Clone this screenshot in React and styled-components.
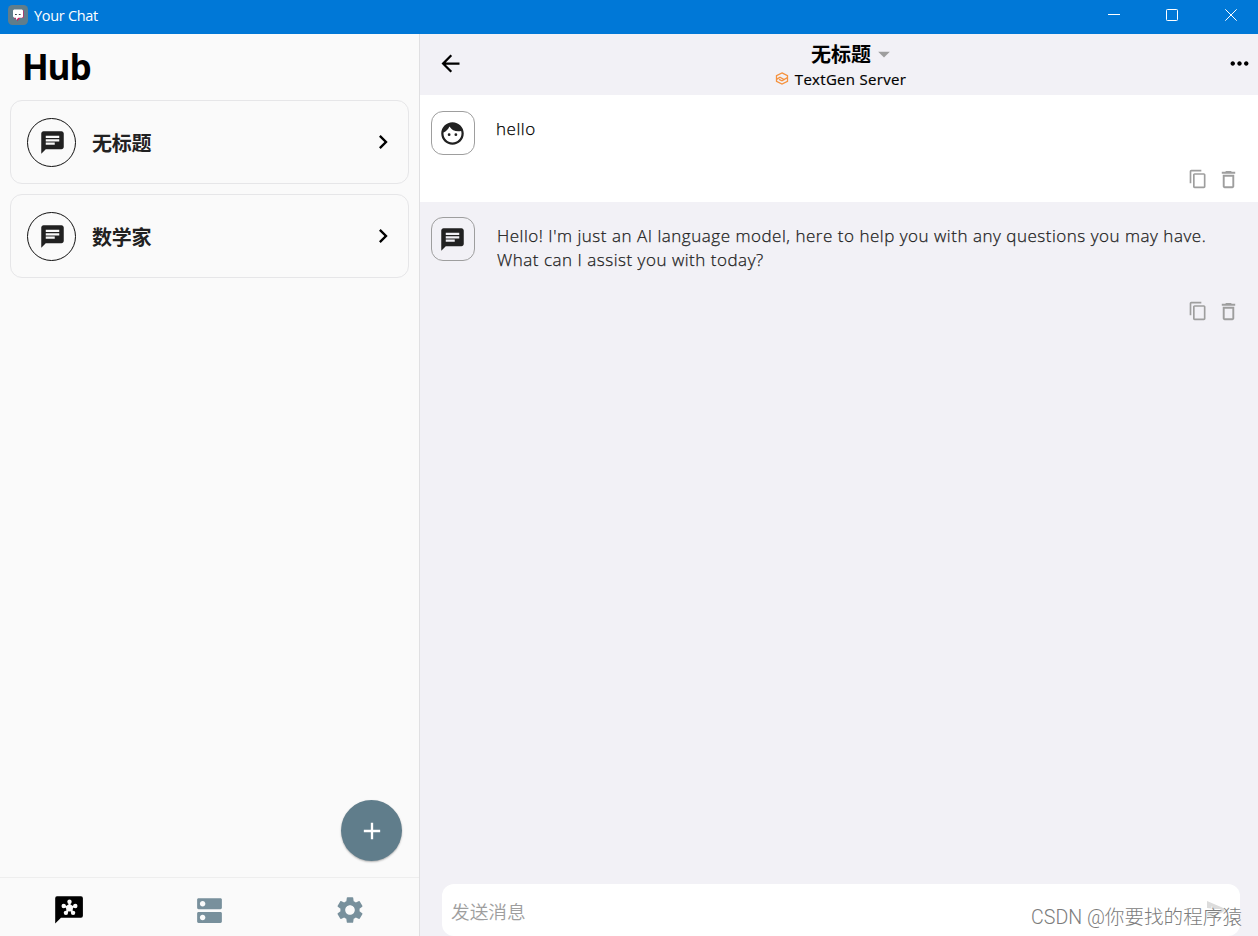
import styled, { createGlobalStyle } from "styled-components";
import {
  MdAdd,
  MdArrowBack,
  MdArrowDropDown,
  MdChat,
  MdChevronRight,
  MdContentCopy,
  MdDeleteOutline,
  MdDns,
  MdFace,
  MdMoreHoriz,
  MdSend,
  MdSettings,
} from "react-icons/md";

const chats = [
  { id: 1, name: "无标题" },
  { id: 2, name: "数学家" },
];

const messages = [
  { id: 1, user: true, lines: ["hello"] },
  {
    id: 2,
    user: false,
    lines: [
      "Hello! I'm just an AI language model, here to help you with any questions you may have.",
      "What can I assist you with today?",
    ],
  },
];

function AppLogo() {
  return (
    <svg width="20" height="20" viewBox="0 0 20 20">
      <rect width="20" height="20" rx="4.5" fill="#607d8b" />
      <path d="M6 5.6h9.6v7.2h-3.4L9 16.2v-2.6H6z" fill="#d81b60" />
      <path d="M6 4.600h8l1 1v6.200l-1 1h-3.600L8 15v-2.200H6.200L5 11.500V5.600z" fill="#fff" />
      <path d="M7 9.500h1.800M10.800 9.500h1.800" stroke="#37474f" strokeWidth="1" />
    </svg>
  );
}

function ServerLogo() {
  return (
    <svg width="14" height="14" viewBox="0 0 14 14" fill="none" stroke="#f5923e" strokeWidth="1.300">
      <path d="M7 .9 12.500 3.700v5.600L7 12.100 1.500 9.300V3.700z" />
      <path d="M1.500 7.400 5 5.200l4 2.400 3.500-2M4 7.300l3 1.500 3-1.700" />
    </svg>
  );
}

function HubIcon() {
  const angles = [-90, -18, 54, 126, 198];
  return (
    <svg width="28" height="28" viewBox="0 0 28 28">
      <path d="M2 .3h24a1.900 1.900 0 0 1 1.900 1.900v17.600a1.900 1.900 0 0 1-1.900 1.900H6L.2 27.500V2.200A1.900 1.900 0 0 1 2 .3z" fill="#000" />
      <g fill="#fafafa" stroke="#fafafa">
        <circle cx="14.500" cy="11.900" r="3.500" stroke="none" />
        {angles.map((a) => {
          const x = 14.5 + 6.1 * Math.cos((a * Math.PI) / 180);
          const y = 11.9 + 6.1 * Math.sin((a * Math.PI) / 180);
          return (
            <g key={a}>
              <line x1="14.500" y1="11.900" x2={x} y2={y} strokeWidth="2" />
              <circle cx={x} cy={y} r="2.200" stroke="none" />
            </g>
          );
        })}
      </g>
    </svg>
  );
}

function TitleBar() {
  return (
    <Bar>
      <AppLogo />
      <BarTitle>Your Chat</BarTitle>
      <WindowButtons>
        <svg width="12" height="12"><path d="M0 5.500h12" /></svg>
        <svg width="12" height="12"><rect x=".5" y=".5" width="11" height="11" rx=".8" /></svg>
        <svg width="12" height="12"><path d="M.3.3l11.400 11.400M11.700.3.3 11.700" /></svg>
      </WindowButtons>
    </Bar>
  );
}

function Message({ message }) {
  return (
    <MessageRow $user={message.user}>
      <Avatar $user={message.user}>
        {message.user ? <MdFace size={27} /> : <MdChat size={27} />}
      </Avatar>
      <MessageBody $user={message.user}>
        {message.lines.map((line) => (
          <p key={line}>{line}</p>
        ))}
      </MessageBody>
      <Actions>
        <MdContentCopy size={20} />
        <MdDeleteOutline size={23} />
      </Actions>
    </MessageRow>
  );
}

function App() {
  return (
    <Window>
      <GlobalStyle />
      <TitleBar />
      <Content>
        <Sidebar>
          <Heading>Hub</Heading>
          <ChatList>
            {chats.map((chat) => (
              <ChatCard key={chat.id}>
                <ChatCircle>
                  <MdChat size={27} />
                </ChatCircle>
                <ChatName>{chat.name}</ChatName>
                <MdChevronRight size={28} />
              </ChatCard>
            ))}
          </ChatList>
          <AddButton>
            <MdAdd size={28} />
          </AddButton>
          <BottomNav>
            <HubIcon />
            <MdDns size={33} />
            <MdSettings size={32} />
          </BottomNav>
        </Sidebar>
        <ChatScreen>
          <ChatHeader>
            <MdArrowBack size={27} />
            <HeaderCenter>
              <HeaderTitle>
                无标题
                <MdArrowDropDown size={28} />
              </HeaderTitle>
              <HeaderServer>
                <ServerLogo />
                TextGen Server
              </HeaderServer>
            </HeaderCenter>
            <MdMoreHoriz size={27} />
          </ChatHeader>
          {messages.map((message) => (
            <Message key={message.id} message={message} />
          ))}
          <InputBox>
            <Placeholder>发送消息</Placeholder>
            <MdSend size={24} />
          </InputBox>
        </ChatScreen>
      </Content>
      <Watermark>CSDN @你要找的程序猿</Watermark>
    </Window>
  );
}

export default App;

const GlobalStyle = createGlobalStyle`
* {
  box-sizing: border-box;
}
body {
  margin: 0;
  overflow: hidden;
  font-family: "Open Sans", "Noto Sans CJK SC", sans-serif;
}
p, h1 {
  margin: 0;
}
svg {
  display: block;
  flex-shrink: 0;
}
`;

const Window = styled.div`
position: relative;
display: flex;
flex-direction: column;
width: 1258px;
height: 936px;
overflow: hidden;
`;

const Bar = styled.header`
display: flex;
align-items: center;
height: 34px;
padding: 0 21px 4px 8px;
background: #0078d7;
color: #fff;
`;

const BarTitle = styled.span`
margin-left: 6px;
font-size: 14.500px;
line-height: 20px;
padding-top: 2px;
letter-spacing: -0.300px;
`;

const WindowButtons = styled.div`
display: flex;
gap: 47px;
margin-left: auto;

svg {
  fill: none;
  stroke: #fff;
  stroke-width: 1;
}
svg:first-child {
  margin-right: -1px;
}
`;

const Content = styled.div`
display: flex;
height: 902px;
`;

const Sidebar = styled.aside`
display: flex;
flex-direction: column;
width: 420px;
background: #fafafa;
border-right: 1px solid #e0e0e2;
`;

const Heading = styled.h1`
height: 66px;
padding: 9px 0 0 22px;
font-size: 35px;
line-height: 48px;
font-weight: 700;
letter-spacing: -1.200px;
color: #000;
`;

const ChatList = styled.div`
display: flex;
flex-direction: column;
gap: 10px;
padding: 0 10px;
`;

const ChatCard = styled.div`
display: flex;
align-items: center;
height: 84px;
padding: 0 11px 0 16px;
border: 1px solid #e6e6e8;
border-radius: 12px;
color: #000;
`;

const ChatCircle = styled.div`
display: flex;
align-items: center;
justify-content: center;
width: 49px;
height: 49px;
padding-left: 1px;
border: 1px solid #111;
border-radius: 50%;
color: #212121;
`;

const ChatName = styled.span`
flex: 1;
margin-left: 16px;
padding-top: 1px;
font-size: 20px;
font-weight: 700;
letter-spacing: -0.200px;
color: #212121;
`;

const AddButton = styled.div`
display: flex;
align-items: center;
justify-content: center;
width: 61px;
height: 61px;
margin: auto 17px 16px auto;
border-radius: 50%;
background: #607d8b;
color: #fff;
box-shadow: 0 1px 2px rgba(0, 0, 0, 0.3);
`;

const BottomNav = styled.nav`
display: flex;
align-items: center;
justify-content: space-between;
height: 59px;
padding: 6px 53px 0 55px;
border-top: 1px solid #eeeeee;
color: #78909c;

svg:nth-child(2) {
  margin-left: 2px;
}
`;

const ChatScreen = styled.section`
display: flex;
flex: 1;
flex-direction: column;
background: #f2f1f6;
`;

const ChatHeader = styled.header`
display: flex;
align-items: center;
justify-content: space-between;
height: 61px;
padding: 0 5px 2px 17px;
color: #000;
`;

const HeaderCenter = styled.div`
display: flex;
flex-direction: column;
align-items: center;
padding-top: 2px;
`;

const HeaderTitle = styled.div`
display: flex;
align-items: center;
height: 28px;
padding-left: 19px;
font-size: 20px;
font-weight: 700;

svg {
  margin-left: -1px;
  color: #9e9e9e;
}
`;

const HeaderServer = styled.div`
display: flex;
align-items: center;
gap: 6px;
height: 22px;
padding-right: 9px;
font-size: 15px;
font-weight: 500;
letter-spacing: 0.300px;
-webkit-text-stroke: 0.200px;
`;

const MessageRow = styled.div`
display: flex;
flex-wrap: wrap;
align-content: flex-start;
padding: 16px 19px 0 11px;
height: ${(props) => (props.$user ? "107px" : "132px")};
background: ${(props) => (props.$user ? "#fff" : "transparent")};
`;

const Avatar = styled.div`
display: flex;
align-items: center;
justify-content: center;
width: 44px;
height: 44px;
margin-top: ${(props) => (props.$user ? "0" : "-1px")};
padding-right: 1px;
border: 1px solid #9e9e9e;
border-radius: 12px;
color: #212121;
`;

const MessageBody = styled.div`
flex: 1;
height: ${(props) => (props.$user ? "56px" : "81px")};
padding: 6px 0 0 ${(props) => (props.$user ? "21px" : "22px")};
font-size: 17px;
line-height: 24px;
font-weight: 300;
letter-spacing: 0.520px;
white-space: nowrap;
-webkit-text-stroke: 0.250px;
color: ${(props) => (props.$user ? "#000" : "#212121")};
`;

const Actions = styled.div`
display: flex;
align-items: center;
justify-content: flex-end;
gap: 8px;
width: 100%;
height: 24px;
color: #9e9e9e;

svg:first-child {
  margin-right: 0.500px;
}
svg:last-child {
  margin-right: -0.500px;
}
`;

const InputBox = styled.div`
display: flex;
align-items: center;
justify-content: space-between;
height: 52px;
margin: auto 18px 0 22px;
padding: 0 11px 0 9px;
border-radius: 12px;
background: #fff;
color: #dcdcdc;
`;

const Placeholder = styled.span`
font-family: "Noto Sans CJK SC", sans-serif;
font-size: 18.700px;
font-weight: 350;
color: #9e9e9e;
`;

const Watermark = styled.div`
position: absolute;
right: 16px;
bottom: 4px;
font-family: Roboto, "Noto Sans CJK SC", sans-serif;
font-size: 19.600px;
line-height: 28px;
font-weight: 300;
color: #7c7c7c;
text-shadow: -1px -1px 0 #fff;
white-space: nowrap;
`;
